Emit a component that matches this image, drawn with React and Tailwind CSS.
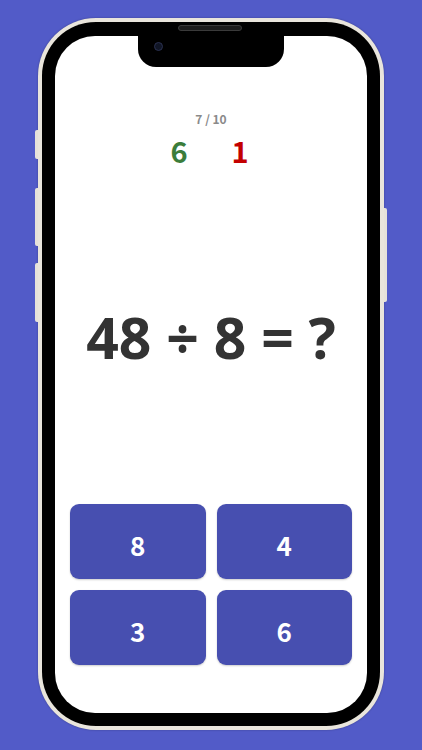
export default function App() {
  const answers = ["8", "4", "3", "6"];
  const cjk = { fontFamily: '"Noto Sans CJK JP", "Noto Sans", sans-serif' };

  return (
    <div
      className="w-[422px] h-[750px] bg-[#525bc8] pt-[18px] pl-[38px] overflow-hidden"
      style={cjk}
    >
      {/* PHONE FRAME */}
      <div className="relative w-[346px] h-[712px] rounded-[58px] bg-[#e9e5dc] p-[4px] shadow-[0_0_2px_rgba(0,0,0,0.3)]">
        {/* side buttons */}
        <div className="absolute left-[-3px] top-[112px] w-[3px] h-[29px] rounded-l-[2px] bg-[#e6e2da]" />
        <div className="absolute left-[-3px] top-[170px] w-[3px] h-[58px] rounded-l-[2px] bg-[#e6e2da]" />
        <div className="absolute left-[-3px] top-[245px] w-[3px] h-[59px] rounded-l-[2px] bg-[#e6e2da]" />
        <div className="absolute right-[-3px] top-[190px] w-[3px] h-[94px] rounded-r-[2px] bg-[#e6e2da]" />

        <div className="relative w-full h-full rounded-[54px] bg-black pt-[14px] pb-[13px] px-[13px]">
          {/* speaker */}
          <div className="absolute left-[136px] top-[3px] w-[64px] h-[6px] rounded-full bg-[#1c1c1c] border border-[#3a3a3a]" />

          {/* SCREEN */}
          <div className="relative w-full h-full rounded-[40px] bg-white overflow-hidden flex flex-col">
            {/* notch */}
            <div className="absolute left-[83px] top-0 w-[146px] h-[31px] bg-black rounded-b-[18px]">
              <div className="absolute left-[16px] top-[6px] w-[9px] h-[9px] rounded-full bg-[#101525] border border-[#2a3050]" />
            </div>

            <div className="pt-[75px] text-center text-[12px] leading-[16px] font-bold text-[#8a8a8a]">
              7 / 10
            </div>

            <div className="mt-[7px] flex justify-center gap-[44px] pr-[3px] text-[29px] leading-[32px] font-bold">
              <span className="text-[#3b7d3b]">6</span>
              <span className="text-[#c40000]">1</span>
            </div>

            <div className="flex-1 flex items-center justify-center pt-[4px]">
              <span
                className="text-[57px] leading-[64px] font-bold text-[#333333] whitespace-nowrap"
                style={{ fontFamily: '"Noto Sans", sans-serif' }}
              >
                48 ÷ 8 = ?
              </span>
            </div>

            <div className="grid grid-cols-2 gap-[11px] px-[15px] pb-[48px]">
              {answers.map((a) => (
                <button
                  key={a}
                  className="h-[75px] rounded-[9px] bg-[#474fb0] text-white text-[26px] font-bold flex items-center justify-center pt-[6px] shadow-[0_1px_2px_rgba(0,0,0,0.2)]"
                >
                  {a}
                </button>
              ))}
            </div>
          </div>
        </div>
      </div>
    </div>
  );
}
